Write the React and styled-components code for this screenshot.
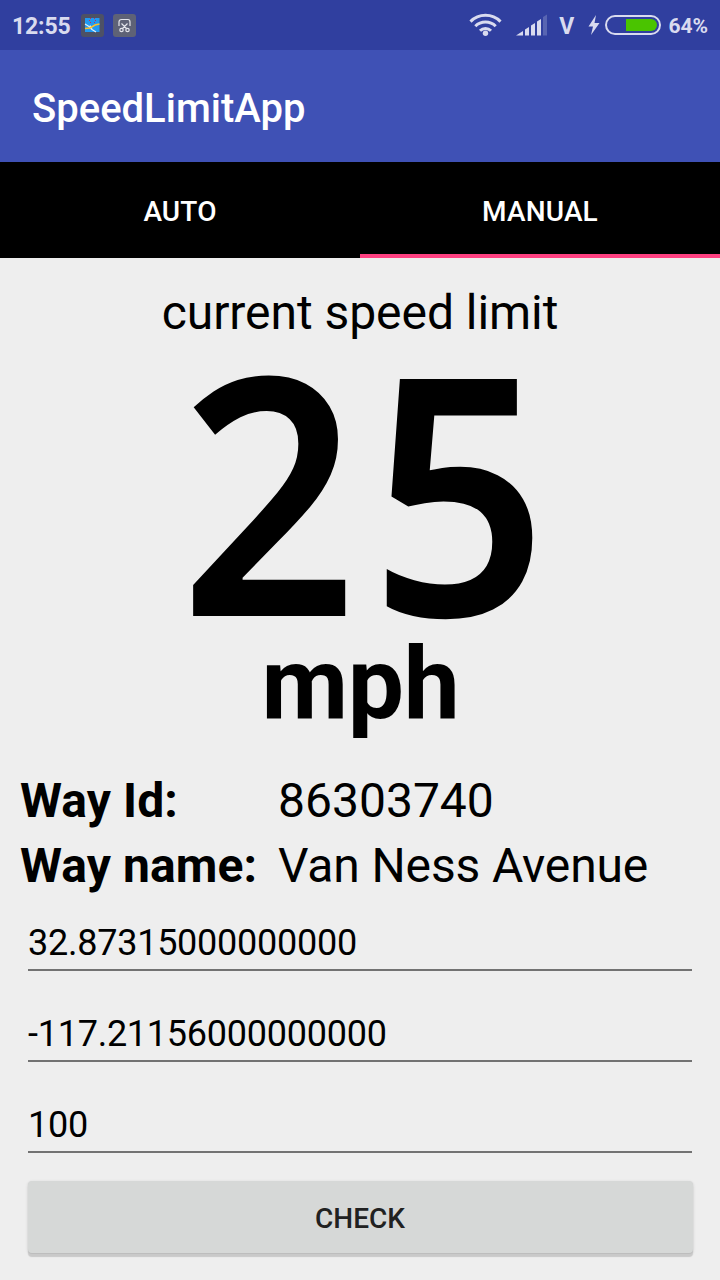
import React from 'react';
import styled, { createGlobalStyle } from 'styled-components';

const Global = createGlobalStyle`
  * { box-sizing: border-box; }
  body { margin: 0; background: #eee; font-family: Roboto, sans-serif; color: #000; }
`;
const Screen = styled.div`
  width: 720px;
  height: 1280px;
  display: flex;
  flex-direction: column;
  background: #eee;
  overflow: hidden;
`;
const StatusBar = styled.div`
  height: 50px;
  flex: none;
  background: #303f9f;
  display: flex;
  align-items: center;
  justify-content: space-between;
  padding: 0 12px;
  color: #d9dbef;
`;
const StatusGroup = styled.div`
  display: flex;
  align-items: center;
`;
const StatusText = styled.span`
  font-size: ${p => p.$size}px;
  font-weight: 700;
  line-height: 28px;
  letter-spacing: ${p => p.$spacing || 0}px;
  margin-left: ${p => p.$gap || 0}px;
  padding-top: ${p => p.$drop || 2}px;
`;
const Glyph = styled.svg`
  display: block;
  flex: none;
  margin-left: ${p => p.$gap || 0}px;
`;
const AppBar = styled.header`
  height: 112px;
  flex: none;
  background: #3f51b5;
  color: #fff;
  display: flex;
  align-items: center;
  padding: 4px 32px 0;
  font-size: 40px;
  font-weight: 500;
`;
const Tabs = styled.nav`
  height: 96px;
  flex: none;
  display: flex;
  background: #000;
`;
const Tab = styled.div`
  flex: 1;
  display: flex;
  align-items: center;
  justify-content: center;
  padding-top: 6px;
  color: #fff;
  font-size: 28px;
  font-weight: 500;
  letter-spacing: 0.15px;
  border-bottom: 4px solid ${p => (p.$active ? '#ff4081' : '#000')};
`;
const Caption = styled.div`
  font-size: 48px;
  line-height: 56px;
  letter-spacing: -0.05px;
  text-align: center;
  margin-top: 27px;
`;
const Speed = styled.div`
  height: 300px;
  margin-top: -4px;
  padding-left: 20px;
  display: flex;
  justify-content: center;
  font-family: 'Noto Sans', sans-serif;
  font-weight: 600;
  font-size: 332px;
  line-height: 300px;
`;
const Digits = styled.span`
  letter-spacing: 13px;
  transform: scaleX(0.937);
`;
const Unit = styled.div`
  font-size: 100px;
  line-height: 100px;
  margin-top: -3px;
  padding-left: 1px;
  font-weight: 700;
  letter-spacing: -0.3px;
  text-align: center;
`;
const Facts = styled.div`
  display: grid;
  grid-template-columns: 258px 1fr;
  padding-left: 20px;
  font-size: 48px;
  line-height: 65px;
  margin-top: 34px;
`;
const Label = styled.div`
  font-weight: 700;
  letter-spacing: 0.1px;
`;
const Value = styled.div`
  letter-spacing: ${p => p.$spacing || 0}px;
`;
const Form = styled.div`
  display: flex;
  flex-direction: column;
  gap: 40px;
  padding: 22px 28px 28px;
`;
const Field = styled.div`
  height: 51px;
  border-bottom: 2px solid #727272;
  font-size: 36px;
  line-height: 46px;
  letter-spacing: -0.25px;
`;
const Button = styled.div`
  margin: 0 27.5px;
  height: 72px;
  padding-top: 2px;
  background: #d6d8d7;
  border-radius: 4px;
  display: flex;
  align-items: center;
  justify-content: center;
  font-size: 28px;
  font-weight: 500;
  color: #212121;
  box-shadow: 0 1px 0 #bdbdbd, 0 4px 1px #c9c9c9, 0 1px 2px 1px #dadada;
`;

const MapIcon = () => (
  <Glyph $gap={10} width="23" height="23" viewBox="0 0 23 23">
    <rect width="23" height="23" rx="3" fill="#4d5165" />
    <rect x="4" y="4" width="14.500" height="14" fill="#2199f3" />
    <path d="M4 10l4 2.500 3 3 4 2.500M9 11.500l2 3" stroke="#e8f0f4" strokeWidth="1.100" fill="none" />
    <path d="M4 14.500l5-0.500 5-3 4.500-1" stroke="#fbc02d" strokeWidth="1.600" fill="none" />
    <path d="M9 4.500h1M13 4.500h1M8 6.500h1M14 6.500h1M9 8.500h1M13 8.500h1" stroke="#c22d53" strokeWidth="1" />
  </Glyph>
);
const ScissorsIcon = () => (
  <Glyph $gap={9} width="23" height="23" viewBox="0 0 23 23">
    <rect width="23" height="23" rx="3" fill="#5e6276" />
    <g stroke="#e4e5ec" strokeWidth="1.2" fill="none">
      <path d="M6 12V8q0-2.500 2.500-2.500h6.500Q17 5.500 17 8v4M8.500 9.500l5 5M14.500 9.500l-5 5" />
      <circle cx="8.500" cy="16" r="1.700" />
      <circle cx="14.500" cy="16" r="1.700" />
    </g>
  </Glyph>
);
const WifiIcon = () => (
  <Glyph width="34" height="26" viewBox="0 0 34 26">
    <g stroke="#d9dbef" strokeWidth="3" fill="none">
      <path d="M1.500 9.600a21 21 0 0 1 30 0" />
      <path d="M6.300 14.300a14.500 14.500 0 0 1 20.400 0" />
      <path d="M11 18.800a7.800 7.800 0 0 1 11 0" />
    </g>
    <circle cx="16.500" cy="21.200" r="2.700" fill="#d9dbef" />
  </Glyph>
);
const SignalIcon = () => (
  <Glyph $gap={13} width="31" height="22" viewBox="0 0 31 22">
    <path d="M0 21.500l7-4.500v4.500zM9 15.500l4-2.500v8.500H9zM15 11.500l4-2.500v12.500h-4zM21 7.500l4-2.500v16.500h-4z" fill="#d9dbef" />
    <path d="M27 3l4-2.500v21h-4z" fill="#5865b2" />
  </Glyph>
);
const BoltIcon = () => (
  <Glyph $gap={14} width="12" height="22" viewBox="0 0 12 22">
    <path d="M8 1L0.500 12.500h4.500L3 21l8.500-12H6.500z" fill="#d9dbef" />
  </Glyph>
);
const BatteryIcon = () => (
  <Glyph $gap={5} width="56" height="20" viewBox="0 0 56 20">
    <rect x="1" y="1" width="54" height="18" rx="9" fill="none" stroke="#d9dbef" strokeWidth="2" />
    <path d="M21 4h25a6 6 0 0 1 0 12H21z" fill="#4ac400" />
  </Glyph>
);

export default function App() {
  return (
    <Screen>
      <Global />
      <StatusBar>
        <StatusGroup>
          <StatusText $size={23} $spacing={-0.15} $drop={3}>12:55</StatusText>
          <MapIcon />
          <ScissorsIcon />
        </StatusGroup>
        <StatusGroup>
          <WifiIcon />
          <SignalIcon />
          <StatusText $size={23} $gap={12.5} $drop={3}>V</StatusText>
          <BoltIcon />
          <BatteryIcon />
          <StatusText $size={21} $gap={7}>64%</StatusText>
        </StatusGroup>
      </StatusBar>
      <AppBar>SpeedLimitApp</AppBar>
      <Tabs>
        <Tab>AUTO</Tab>
        <Tab $active>MANUAL</Tab>
      </Tabs>
      <Caption>current speed limit</Caption>
      <Speed><Digits>25</Digits></Speed>
      <Unit>mph</Unit>
      <Facts>
        <Label>Way Id:</Label>
        <Value>86303740</Value>
        <Label>Way name:</Label>
        <Value $spacing={-0.13}>Van Ness Avenue</Value>
      </Facts>
      <Form>
        <Field>32.87315000000000</Field>
        <Field>-117.21156000000000</Field>
        <Field>100</Field>
      </Form>
      <Button>CHECK</Button>
    </Screen>
  );
}
